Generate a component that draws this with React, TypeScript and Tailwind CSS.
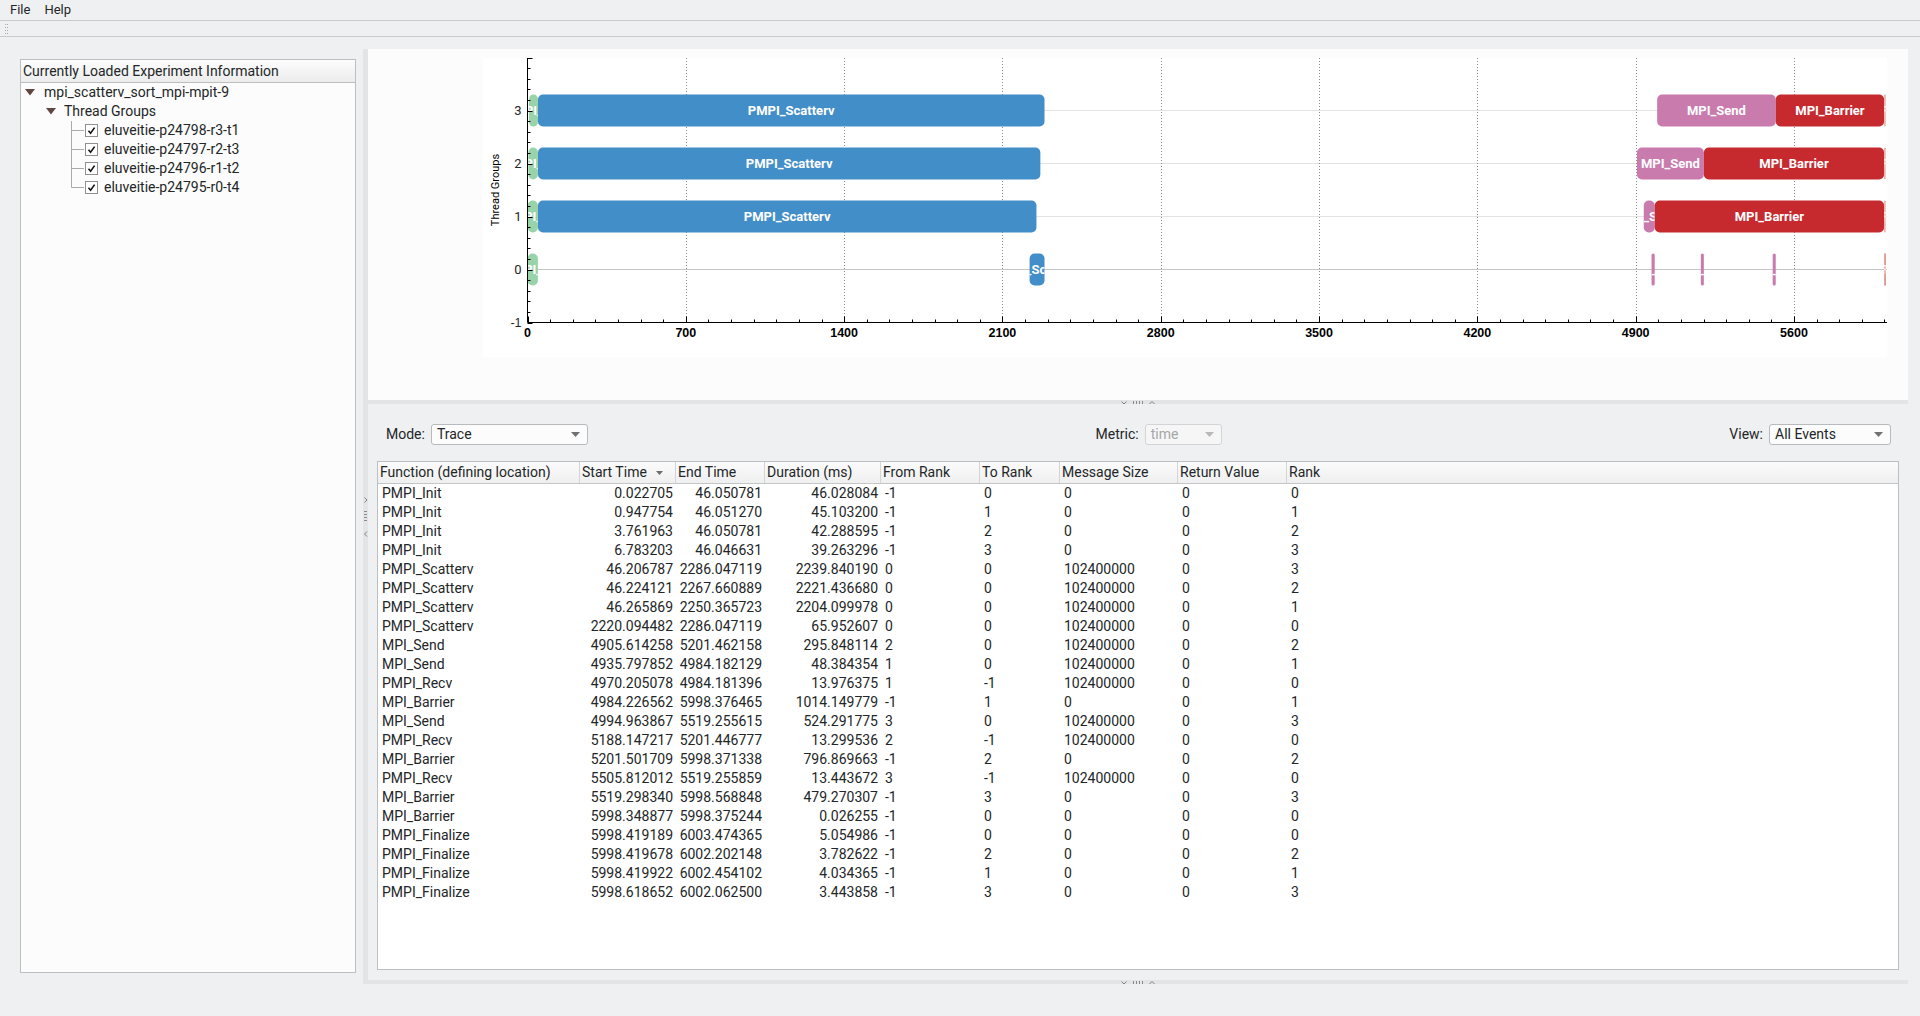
import React from "react";

// trace table rows: function, start, end, duration, from, to, size, return, rank
const ROWS: string[][] = [
  ["PMPI_Init", "0.022705", "46.050781", "46.028084", "-1", "0", "0", "0", "0"],
  ["PMPI_Init", "0.947754", "46.051270", "45.103200", "-1", "1", "0", "0", "1"],
  ["PMPI_Init", "3.761963", "46.050781", "42.288595", "-1", "2", "0", "0", "2"],
  ["PMPI_Init", "6.783203", "46.046631", "39.263296", "-1", "3", "0", "0", "3"],
  ["PMPI_Scatterv", "46.206787", "2286.047119", "2239.840190", "0", "0", "102400000", "0", "3"],
  ["PMPI_Scatterv", "46.224121", "2267.660889", "2221.436680", "0", "0", "102400000", "0", "2"],
  ["PMPI_Scatterv", "46.265869", "2250.365723", "2204.099978", "0", "0", "102400000", "0", "1"],
  ["PMPI_Scatterv", "2220.094482", "2286.047119", "65.952607", "0", "0", "102400000", "0", "0"],
  ["MPI_Send", "4905.614258", "5201.462158", "295.848114", "2", "0", "102400000", "0", "2"],
  ["MPI_Send", "4935.797852", "4984.182129", "48.384354", "1", "0", "102400000", "0", "1"],
  ["PMPI_Recv", "4970.205078", "4984.181396", "13.976375", "1", "-1", "102400000", "0", "0"],
  ["MPI_Barrier", "4984.226562", "5998.376465", "1014.149779", "-1", "1", "0", "0", "1"],
  ["MPI_Send", "4994.963867", "5519.255615", "524.291775", "3", "0", "102400000", "0", "3"],
  ["PMPI_Recv", "5188.147217", "5201.446777", "13.299536", "2", "-1", "102400000", "0", "0"],
  ["MPI_Barrier", "5201.501709", "5998.371338", "796.869663", "-1", "2", "0", "0", "2"],
  ["PMPI_Recv", "5505.812012", "5519.255859", "13.443672", "3", "-1", "102400000", "0", "0"],
  ["MPI_Barrier", "5519.298340", "5998.568848", "479.270307", "-1", "3", "0", "0", "3"],
  ["MPI_Barrier", "5998.348877", "5998.375244", "0.026255", "-1", "0", "0", "0", "0"],
  ["PMPI_Finalize", "5998.419189", "6003.474365", "5.054986", "-1", "0", "0", "0", "0"],
  ["PMPI_Finalize", "5998.419678", "6002.202148", "3.782622", "-1", "2", "0", "0", "2"],
  ["PMPI_Finalize", "5998.419922", "6002.454102", "4.034365", "-1", "1", "0", "0", "1"],
  ["PMPI_Finalize", "5998.618652", "6002.062500", "3.443858", "-1", "3", "0", "0", "3"],
];

const COLS = [
  { label: "Function (defining location)", w: "w-[202px]", cell: "pl-[4px]" },
  { label: "Start Time", w: "w-[96px]", cell: "text-right pr-[3px]", sort: true },
  { label: "End Time", w: "w-[89px]", cell: "text-right pr-[3px]" },
  { label: "Duration (ms)", w: "w-[116px]", cell: "text-right pr-[3px]" },
  { label: "From Rank", w: "w-[99px]", cell: "pl-[4px]" },
  { label: "To Rank", w: "w-[80px]", cell: "pl-[4px]" },
  { label: "Message Size", w: "w-[118px]", cell: "pl-[4px]" },
  { label: "Return Value", w: "w-[109px]", cell: "pl-[4px]" },
  { label: "Rank", w: "flex-1", cell: "pl-[4px]" },
];

const COLORS: Record<string, string> = {
  PMPI_Init: "#98d3a9",
  PMPI_Scatterv: "#428ec9",
  MPI_Send: "#c97bad",
  PMPI_Recv: "#c97bad",
  MPI_Barrier: "#c62a2f",
  PMPI_Finalize: "#e7b0a6",
};

const K = 0.22616;
const AX = 44.5;
const AY = 264.5;
const RH = 53;
const W = 1404;
const xOf = (u: number) => AX + u * K;
const yOf = (r: number) => AY - (r + 1) * RH;

function TraceChart() {
  const xticks = [];
  for (let u = 0; u <= 6000; u += 100) {
    const x = Math.round(xOf(u)) + 0.5;
    xticks.push(<line key={u} x1={x} x2={x} y1={AY} y2={AY - (u % 700 === 0 ? 6 : 3)} stroke="#000" />);
  }
  const yticks = [];
  for (let i = 0; i <= 25; i++) {
    const y = Math.round(AY - i * 10.6) + 0.5;
    yticks.push(<line key={i} x1={AX} x2={AX + (i % 5 === 0 ? 5 : 3)} y1={y} y2={y} stroke="#000" />);
  }
  const labels = [0, 700, 1400, 2100, 2800, 3500, 4200, 4900, 5600];
  return (
    <svg width={W} height={299} className="block bg-white">
      {[0, 1, 2, 3].map((r) => (
        <line key={r} x1={AX} x2={W} y1={yOf(r)} y2={yOf(r)} stroke={r === 0 ? "#c6c6c6" : "#e3e3e3"} />
      ))}
      {labels.slice(1).map((u) => (
        <line key={u} x1={Math.round(xOf(u)) + 0.5} x2={Math.round(xOf(u)) + 0.5} y1={0} y2={AY} stroke="#8c8c8c" strokeDasharray="1 2" />
      ))}
      <defs>
        {ROWS.map((row, i) => {
          const x1 = xOf(Number(row[1]));
          const w = Math.max(xOf(Number(row[2])) - x1, 1.6);
          return (
            <clipPath key={i} id={`bar-clip-${i}`}>
              <rect x={x1} y={yOf(Number(row[8])) - 16} width={w} height={32} />
            </clipPath>
          );
        })}
      </defs>
      {ROWS.map((row, i) => {
        const x1 = xOf(Number(row[1]));
        const w = Math.max(xOf(Number(row[2])) - x1, 1.6);
        const cy = yOf(Number(row[8]));
        return (
          <g key={i}>
            <rect x={x1} y={cy - 16} width={w} height={32} rx={Math.min(5, w / 2)} fill={COLORS[row[0]]} />
            <text
              x={x1 + w / 2}
              y={cy + 4.5}
              textAnchor="middle"
              fill="#fff"
              fontFamily="Roboto, sans-serif"
              fontWeight={700}
              fontSize={13}
              clipPath={`url(#bar-clip-${i})`}
            >
              {row[0]}
            </text>
          </g>
        );
      })}
      <line x1={AX} x2={AX} y1={0} y2={AY} stroke="#000" />
      <line x1={AX} x2={W} y1={AY} y2={AY} stroke="#000" />
      {xticks}
      {yticks}
      {labels.map((u) => (
        <text key={u} x={xOf(u)} y={AY + 14} textAnchor="middle" fontFamily="Liberation Sans, Arial, sans-serif" fontWeight={700} fontSize={12.5} fill="#000">
          {u}
        </text>
      ))}
      {[0, 1, 2, 3].map((r) => (
        <text key={r} x={AX - 6} y={yOf(r) + 4.5} textAnchor="end" fontFamily="Roboto, sans-serif" fontSize={13} fill="#232627">
          {r}
        </text>
      ))}
      <text x={AX - 6} y={AY + 4} textAnchor="end" fontFamily="Liberation Sans, Arial, sans-serif" fontSize={12.5} fill="#232627">
        -1
      </text>
      <text transform="translate(16 132) rotate(-90)" textAnchor="middle" fontFamily="Roboto, sans-serif" fontSize={11} fill="#000">
        Thread Groups
      </text>
    </svg>
  );
}

function Combo({ text, w, disabled }: { text: string; w: string; disabled?: boolean }) {
  return (
    <div
      className={`${w} h-[21px] rounded-[3px] border flex items-center justify-between pl-[5px] pr-[7px] ${
        disabled ? "border-[#d3d4d5] bg-[#f6f6f6] text-[#a5a7a9]" : "border-[#b9babc] bg-[#fcfcfc] text-[#232627]"
      }`}
    >
      <span>{text}</span>
      <svg width="9" height="5">
        <path d="M0 0h9L4.5 5z" fill={disabled ? "#b8b9ba" : "#6f7172"} />
      </svg>
    </div>
  );
}

function HandleH() {
  return (
    <svg width="34" height="5" className="block">
      <path d="M0.5 1.5 L3 4 L5.5 1.5" fill="none" stroke="#7f8081" />
      {[12, 15, 18, 21].map((x) => (
        <rect key={x} x={x} y={1} width={1} height={3} fill="#8a8b8c" />
      ))}
      <path d="M28.5 4 L31 1.5 L33.5 4" fill="none" stroke="#7f8081" />
    </svg>
  );
}

function HandleV() {
  return (
    <svg width="5" height="40" className="block">
      <path d="M1.5 0.5 L4 3 L1.5 5.5" fill="none" stroke="#7f8081" />
      {[14, 17, 20, 23].map((y) => (
        <rect key={y} x={1} y={y} width={3} height={1} fill="#8a8b8c" />
      ))}
      <path d="M4 34.5 L1.5 37 L4 39.5" fill="none" stroke="#7f8081" />
    </svg>
  );
}

function Check() {
  return (
    <div className="w-[13px] h-[13px] border border-[#8e9091] bg-white flex items-center justify-center">
      <svg width="9" height="9">
        <path d="M1.5 4.8 L3.6 7.2 L7.6 1.6" fill="none" stroke="#111" strokeWidth="1.6" />
      </svg>
    </div>
  );
}

function Triangle() {
  return (
    <svg width="10" height="7" className="block">
      <path d="M0 0h10L5 6.5z" fill="#5f4641" />
    </svg>
  );
}

const THREADS = ["eluveitie-p24798-r3-t1", "eluveitie-p24797-r2-t3", "eluveitie-p24796-r1-t2", "eluveitie-p24795-r0-t4"];

export default function App() {
  return (
    <div className="w-[1920px] h-[1016px] overflow-hidden bg-[#eff0f1] text-[#232627] text-[14px] font-['Roboto','Noto_Sans',sans-serif] flex flex-col">
      <div className="h-[21px] shrink-0 flex items-center gap-[14px] pl-[10px] text-[13px] border-b border-[#c9cacb]">
        <span>File</span>
        <span>Help</span>
      </div>
      <div className="h-[16px] shrink-0 flex items-center pl-[5px] border-b border-[#c9cacb]">
        <div className="grid grid-cols-2 gap-x-[1px] gap-y-[2px]">
          {Array.from({ length: 8 }).map((_, i) => (
            <span key={i} className="w-[1px] h-[1px] bg-[#a9aaab]" />
          ))}
        </div>
      </div>
      <div className="flex-1 flex min-h-0">
        <div className="w-[363px] shrink-0 pl-[20px] pr-[7px] pt-[22px] pb-[43px]">
          <div className="h-full border border-[#bcbebf] bg-[#fcfcfc] flex flex-col">
            <div className="h-[23px] flex items-center pl-[2px] border-b border-[#bcbebf] bg-gradient-to-b from-[#fdfdfd] to-[#ececec]">
              Currently Loaded Experiment Information
            </div>
            <div className="flex flex-col">
              <div className="h-[19px] flex items-center pl-[4px]">
                <Triangle />
                <span className="ml-[9px]">mpi_scatterv_sort_mpi-mpit-9</span>
              </div>
              <div className="h-[19px] flex items-center pl-[25px]">
                <Triangle />
                <span className="ml-[8px]">Thread Groups</span>
              </div>
              {THREADS.map((t, i) => (
                <div key={t} className="h-[19px] flex items-center pl-[50px]">
                  <svg width="14" height="19" className="block">
                    <line x1="0.5" x2="0.5" y1="0" y2={i === THREADS.length - 1 ? 9.5 : 19} stroke="#a9aaab" />
                    <line x1="0.5" x2="13" y1="9.5" y2="9.5" stroke="#a9aaab" />
                  </svg>
                  <Check />
                  <span className="ml-[6px]">{t}</span>
                </div>
              ))}
            </div>
          </div>
        </div>
        <div className="w-[5px] shrink-0 mt-[12px] mb-[32px] bg-[#e3e4e5] flex items-center justify-center">
          <HandleV />
        </div>
        <div className="flex-1 flex flex-col pt-[12px] pr-[12px] pb-[32px]">
          <div className="h-[351px] shrink-0 bg-[#fcfcfc] pl-[115px] pt-[9px]">
            <TraceChart />
          </div>
          <div className="h-[4px] shrink-0 bg-[#e3e4e5] flex items-center justify-center">
            <HandleH />
          </div>
          <div className="flex-1 flex flex-col min-h-0 px-[9px] pt-[20px] pb-[10px]">
            <div className="h-[21px] flex items-center pl-[9px] pr-[8px]">
              <span className="mr-[6px]">Mode:</span>
              <Combo text="Trace" w="w-[157px]" />
              <div className="flex-1" />
              <span className="mr-[6px]">Metric:</span>
              <Combo text="time" w="w-[77px]" disabled />
              <div className="flex-1" />
              <span className="mr-[6px]">View:</span>
              <Combo text="All Events" w="w-[122px]" />
            </div>
            <div className="flex-1 mt-[16px] border border-[#bcbebf] bg-white flex flex-col">
              <div className="h-[22px] flex border-b border-[#c5c6c7] bg-gradient-to-b from-[#fbfbfb] to-[#efefef]">
                {COLS.map((c, i) => (
                  <div
                    key={c.label}
                    className={`${c.w} h-full flex items-center justify-between pl-[2px] pr-[12px] ${i < COLS.length - 1 ? "border-r border-[#d3d4d5]" : ""}`}
                  >
                    <span>{c.label}</span>
                    {c.sort && (
                      <svg width="7" height="4" className="block">
                        <path d="M0 0h7L3.5 4z" fill="#6a6c6d" />
                      </svg>
                    )}
                  </div>
                ))}
              </div>
              <div className="flex flex-col">
                {ROWS.map((row, r) => (
                  <div key={r} className="h-[19px] flex items-center leading-[19px]">
                    {COLS.map((c, i) => (
                      <div key={i} className={`${c.w} ${c.cell} whitespace-nowrap`}>
                        {row[i]}
                      </div>
                    ))}
                  </div>
                ))}
              </div>
            </div>
          </div>
          <div className="h-[4px] shrink-0 bg-[#e3e4e5] flex items-center justify-center">
            <HandleH />
          </div>
        </div>
      </div>
    </div>
  );
}
